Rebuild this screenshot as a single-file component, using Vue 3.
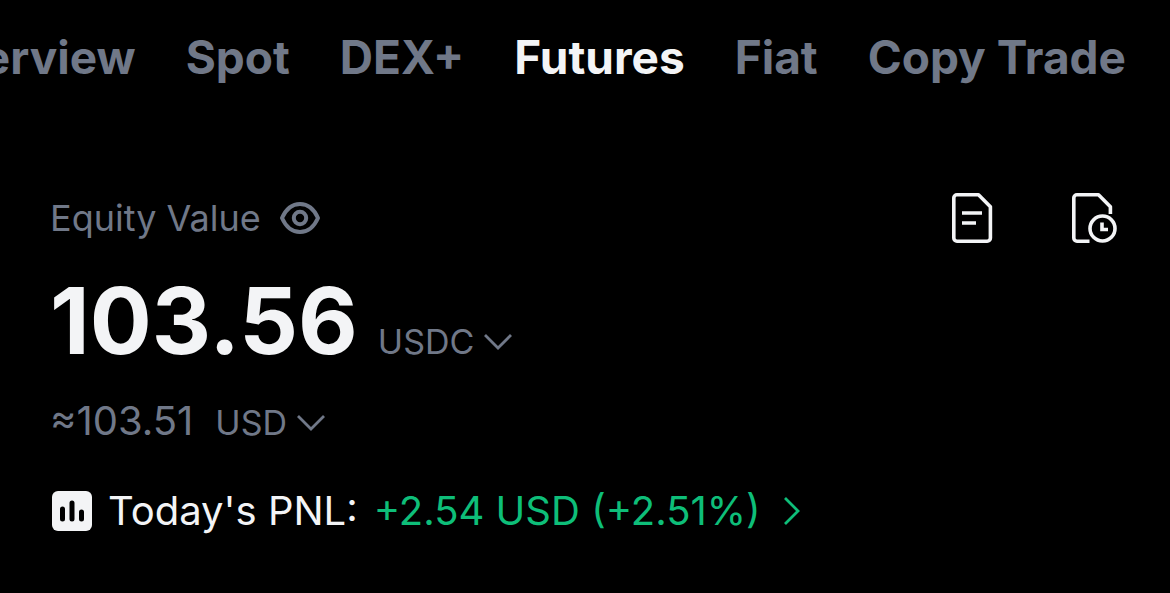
<script setup>
import { ref } from 'vue'

const tabs = ['Overview', 'Spot', 'DEX+', 'Futures', 'Fiat', 'Copy Trade']
const active = ref('Futures')
</script>

<template>
  <main class="page">
    <nav class="tabs" aria-label="Accounts">
      <button
        v-for="tab in tabs"
        :key="tab"
        type="button"
        class="tab"
        :class="{ active: tab === active }"
        @click="active = tab"
      >{{ tab }}</button>
    </nav>

    <section class="summary">
      <header class="head">
        <div class="label">
          <span>Equity Value</span>
          <button type="button" class="icon-btn" aria-label="Hide balance">
            <svg width="42" height="34" viewBox="0 0 42 34" fill="none" stroke="currentColor" stroke-width="4">
              <path d="M3 17C7 8 13 3 21 3s14 5 18 14c-4 9-10 14-18 14S7 26 3 17Z" stroke-linejoin="round" />
              <circle cx="21" cy="17" r="6.2" />
            </svg>
          </button>
        </div>
        <div class="actions">
          <button type="button" class="icon-btn" aria-label="Orders">
            <svg width="46" height="52" viewBox="0 0 46 52" fill="none" stroke="currentColor" stroke-width="3.6">
              <path d="M6 2.8H27.5L39.4 14.7V46a3.2 3.2 0 0 1-3.2 3.2H6A3.2 3.2 0 0 1 2.8 46V6A3.2 3.2 0 0 1 6 2.8Z" stroke-linejoin="round" />
              <path d="M11 21H31M11 31H25" />
            </svg>
          </button>
          <button type="button" class="icon-btn" aria-label="History">
            <svg width="46" height="52" viewBox="0 0 46 52" fill="none" stroke="currentColor" stroke-width="3.6">
              <path d="M18.5 49.2H6A3.2 3.2 0 0 1 2.8 46V6A3.2 3.2 0 0 1 6 2.8H27.5L39.4 14.7V22" stroke-linejoin="round" />
              <circle cx="31.5" cy="36.5" r="12.5" />
              <path d="M31 30.5V37.5H37" />
            </svg>
          </button>
        </div>
      </header>

      <div class="equity">
        <strong class="amount">103.56</strong>
        <button type="button" class="unit">
          USDC
          <svg width="28" height="18" viewBox="0 0 28 18" fill="none" stroke="currentColor" stroke-width="2.8">
            <path d="M1 2L14 15L27 2" />
          </svg>
        </button>
      </div>

      <div class="approx">
        <span class="approx-value">≈103.51</span>
        <button type="button" class="unit">
          USD
          <svg width="28" height="18" viewBox="0 0 28 18" fill="none" stroke="currentColor" stroke-width="2.8">
            <path d="M1 2L14 15L27 2" />
          </svg>
        </button>
      </div>

      <a class="pnl" href="#pnl">
        <svg class="chart" width="40" height="40" viewBox="0 0 40 40" fill="none">
          <rect width="40" height="40" rx="6" fill="#f3f4f6" />
          <path d="M10.5 18V28M20 12V28M29.5 21V28" stroke="#000" stroke-width="5" stroke-linecap="round" />
        </svg>
        <span class="pnl-label">Today's PNL:</span>
        <span class="gain">+2.54 USD (+2.51%)</span>
        <svg class="arrow" width="18" height="28" viewBox="0 0 18 28" fill="none" stroke="currentColor" stroke-width="2.8">
          <path d="M2 1L15 14L2 27" />
        </svg>
      </a>
    </section>
  </main>
</template>

<style>
body {
  background: #000;
}
</style>

<style scoped>
.page {
  min-height: 100vh;
  box-sizing: border-box;
  background: #000;
  color: #f3f4f6;
  font-family: Inter, "Liberation Sans", sans-serif;
  overflow: hidden;
}

button {
  padding: 0;
  border: 0;
  background: none;
  color: inherit;
  font: inherit;
  cursor: pointer;
}

svg {
  display: block;
  flex: none;
}

.tabs {
  display: flex;
  justify-content: flex-end;
  gap: 50px;
  padding: 31px 44px 0 0;
}

.tab {
  flex: none;
  color: #707888;
  font-size: 46px;
  font-weight: 700;
  line-height: 52px;
  white-space: nowrap;
}

.tab.active {
  color: #f3f4f6;
}

.summary {
  padding: 107px 50px 0;
}

.head {
  display: flex;
  align-items: center;
  justify-content: space-between;
}

.label {
  display: flex;
  align-items: center;
  gap: 18px;
  color: #707888;
  font-size: 36px;
  line-height: 56px;
}

.actions {
  display: flex;
  gap: 74px;
  padding-right: 3px;
}

.equity {
  display: flex;
  align-items: baseline;
  gap: 20px;
  margin-top: 23px;
}

.amount {
  font-size: 92px;
  font-weight: 700;
  line-height: 104px;
}

.unit {
  display: flex;
  align-items: center;
  gap: 10px;
  color: #707888;
  font-size: 34px;
  line-height: 40px;
}

.approx {
  display: flex;
  align-items: baseline;
  gap: 22px;
  margin-top: 24px;
  color: #707888;
}

.approx-value {
  font-size: 40px;
  line-height: 48px;
}

.pnl {
  display: flex;
  align-items: center;
  margin-top: 40px;
  color: #f3f4f6;
  font-size: 40px;
  line-height: 52px;
  text-decoration: none;
  white-space: nowrap;
}

.chart {
  margin: 0 16px 0 2px;
}

.gain {
  margin-left: 16px;
  color: #0ebe79;
}

.arrow {
  margin-left: 22px;
  color: #0ebe79;
}
</style>
